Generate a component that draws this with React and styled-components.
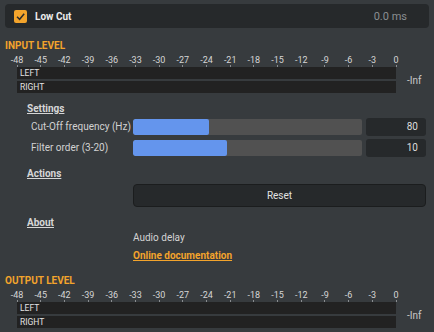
import React from 'react';
import styled, { createGlobalStyle } from 'styled-components';

const GlobalStyle = createGlobalStyle`
  html, body {
    margin: 0;
    padding: 0;
    background: #373b3e;
  }
  body {
    font-family: Roboto, "Liberation Sans", sans-serif;
    color: #d4d4d4;
  }
`;

const Page = styled.div`
  width: 434px;
  height: 332px;
  box-sizing: border-box;
  padding: 4px 5px 0 5px;
  background: #373b3e;
  overflow: hidden;
`;

const Header = styled.div`
  display: flex;
  align-items: center;
  height: 24px;
  padding: 0 22px 0 9px;
  background: #26292b;
  border-radius: 4px;
`;

const Check = styled.span`
  display: flex;
  width: 13px;
  height: 13px;
  background: #f3a42c;
  border-radius: 2px;
  margin-right: 8px;
`;

const HeaderTitle = styled.span`
  flex: 1;
  font-size: 10px;
  font-weight: 700;
  color: #ececec;
`;

const Latency = styled.span`
  font-size: 11px;
  color: #8b8f92;
`;

const LevelTitle = styled.div`
  margin-top: ${(p) => p.$top}px;
  font-size: 10px;
  line-height: 12px;
  font-weight: 700;
  color: #f3a42c;
`;

const Meter = styled.div`
  display: grid;
  grid-template-columns: 379px auto;
  margin: 3px 0 0 12px;
`;

const Scale = styled.div`
  display: flex;
  justify-content: space-between;
  margin: 0 -10px;
  height: 12px;
`;

const Tick = styled.span`
  position: relative;
  width: 20px;
  text-align: center;
  font-size: 9px;
  line-height: 10px;
  color: #d6d6d6;

  &::after {
    content: '';
    position: absolute;
    left: 9.5px;
    top: 10px;
    width: 1px;
    height: 2px;
    background: #8a8d90;
  }
`;

const Bars = styled.div`
  display: flex;
  flex-direction: column;
  gap: 2px;
`;

const Bar = styled.div`
  height: 12px;
  background: #222222;
  font-size: 8.5px;
  line-height: 12px;
  padding-left: 3px;
  color: #e2e2e2;
`;

const Inf = styled.div`
  display: flex;
  align-items: center;
  padding-left: 11px;
  font-size: 10px;
  color: #c9c9c9;
`;

const SectionTitle = styled.div`
  margin: ${(p) => p.$top}px 0 0 22px;
  font-size: 10px;
  line-height: 12px;
  font-weight: 700;
  text-decoration: underline;
  color: #d6d6d6;
`;

const SettingsGrid = styled.div`
  display: grid;
  grid-template-columns: 98px 229px 60px;
  column-gap: 4px;
  row-gap: 3px;
  margin: 3px 0 0 26px;
`;

const ParamLabel = styled.div`
  font-size: 10px;
  line-height: 18px;
  color: #d2d2d2;
  white-space: nowrap;
`;

const Track = styled.div`
  margin: 1px 0;
  height: 16px;
  background: #515151;
  border-radius: 2px;
  overflow: hidden;
`;

const Fill = styled.div`
  height: 100%;
  background: #6495ed;
  border-radius: 2px;
`;

const ValueBox = styled.div`
  height: 18px;
  padding-right: 8px;
  background: #26292b;
  border-radius: 3px;
  font-size: 10px;
  line-height: 18px;
  text-align: right;
  color: #dcdcdc;
`;

const Body = styled.div`
  margin: ${(p) => p.$top}px 3px 0 128px;
`;

const ResetButton = styled.button`
  display: block;
  width: 100%;
  height: 23px;
  background: #26292b;
  border: 1.5px solid #1b1d1e;
  border-radius: 4px;
  font-family: inherit;
  font-size: 10px;
  color: #e2e2e2;
  padding: 0;
`;

const Text = styled.div`
  margin-top: ${(p) => p.$top}px;
  font-size: 10px;
  line-height: 13px;
  color: #d4d4d4;
`;

const DocLink = styled.a`
  display: block;
  margin-top: 5px;
  font-size: 10px;
  line-height: 13px;
  font-weight: 700;
  color: #f3a42c;
  text-decoration: underline;
`;

const ticks = [-48, -45, -42, -39, -36, -33, -30, -27, -24, -21, -18, -15, -12, -9, -6, -3, 0];

function LevelMeter() {
  return (
    <Meter>
      <Scale>
        {ticks.map((t) => (
          <Tick key={t}>{t}</Tick>
        ))}
      </Scale>
      <div />
      <Bars>
        <Bar>LEFT</Bar>
        <Bar>RIGHT</Bar>
      </Bars>
      <Inf>-Inf</Inf>
    </Meter>
  );
}

const params = [
  { label: 'Cut-Off frequency (Hz)', value: 80, fill: 76 },
  { label: 'Filter order (3-20)', value: 10, fill: 94 },
];

export default function App() {
  return (
    <Page>
      <GlobalStyle />
      <Header>
        <Check>
          <svg width="13" height="13" viewBox="0 0 13 13">
            <polyline points="3,6.8 5.6,9.3 10.2,3.8" fill="none" stroke="#2b2b2b" strokeWidth="1.5" />
          </svg>
        </Check>
        <HeaderTitle>Low Cut</HeaderTitle>
        <Latency>0.0 ms</Latency>
      </Header>

      <LevelTitle $top={12}>INPUT LEVEL</LevelTitle>
      <LevelMeter />

      <SectionTitle $top={10}>Settings</SectionTitle>
      <SettingsGrid>
        {params.map((p) => (
          <React.Fragment key={p.label}>
            <ParamLabel>{p.label}</ParamLabel>
            <Track>
              <Fill style={{ width: p.fill }} />
            </Track>
            <ValueBox>{p.value}</ValueBox>
          </React.Fragment>
        ))}
      </SettingsGrid>

      <SectionTitle $top={11}>Actions</SectionTitle>
      <Body $top={4}>
        <ResetButton>Reset</ResetButton>
      </Body>

      <SectionTitle $top={10}>About</SectionTitle>
      <Body $top={0}>
        <Text $top={2}>Audio delay</Text>
        <DocLink href="#">Online documentation</DocLink>
      </Body>

      <LevelTitle $top={13}>OUTPUT LEVEL</LevelTitle>
      <LevelMeter />
    </Page>
  );
}
